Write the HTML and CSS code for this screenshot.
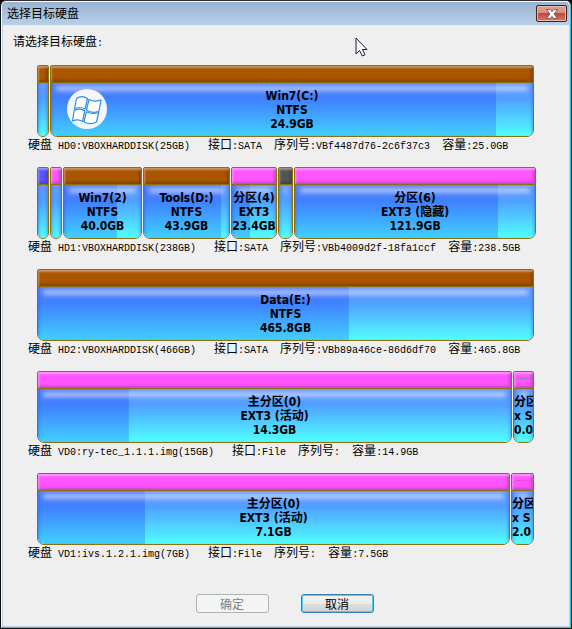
FILE: index.html
```html
<!DOCTYPE html>
<html lang="zh-CN">
<head>
<meta charset="utf-8">
<title>选择目标硬盘</title>
<link rel="stylesheet" href="styles.css">
</head>
<body>
<div class="window">
  <header class="titlebar">
    <h1 class="title">选择目标硬盘</h1>
    <button class="close" type="button" aria-label="关闭">
      <svg width="12" height="10" viewBox="0 0 12 10"><path d="M.6.6h3.600L6 2.600 7.800.6h3.600L8.100 5l3.300 4.400H7.800L6 7.400 4.200 9.400H.6L3.900 5z" fill="#fff" stroke="#5a4a58" stroke-width=".8"/></svg>
    </button>
  </header>
  <main class="content">
    <p class="prompt">请选择目标硬盘<span class="latin">:</span></p>

    <section class="disk">
      <div class="map">
        <div class="part ntfs" style="flex-grow:10"><div class="cap"></div><div class="fill"></div></div>
        <div class="part ntfs" style="flex-grow:482;--used:92.4%"><div class="cap"></div><div class="fill">
          <svg class="logo" width="40" height="40" viewBox="0 0 40 40"><circle cx="20" cy="20" r="20" fill="#f3f6fa"/><g fill="#fff" stroke="#2f8fe0" stroke-width="1.200" stroke-linejoin="round"><path d="M9.500 9.500C13 7 17 7.200 20.500 9.500L18 20C14.500 18 11 18 7.500 20Z"/><path d="M22 10.500C26 13 30 12.500 34 11L32 22C28 24 23.500 23.500 19.500 21Z"/><path d="M7.200 21.500C11 19.500 14.500 19.800 17.800 21.800L15.500 32.500C12.500 30.500 9 30.500 5.500 32Z"/><path d="M19.300 22.800C23.500 25 27.500 25 31.700 23.500L29.500 33C25 35.500 21 35 17 33Z"/></g></svg>
          <p class="label">Win7(C:)<br>NTFS<br>24.9GB</p></div></div>
      </div>
      <p class="info"><span>硬盘<span class="latin"> HD0:VBOXHARDDISK(25GB)</span></span><span>接口<span class="latin">:SATA</span></span><span>序列号<span class="latin">:VBf4487d76-2c6f37c3</span></span><span>容量<span class="latin">:25.0GB</span></span></p>
    </section>

    <section class="disk">
      <div class="map map-wide">
        <div class="part fat" style="flex-grow:10"><div class="cap"></div><div class="fill"></div></div>
        <div class="part ext" style="flex-grow:10"><div class="cap"></div><div class="fill"></div></div>
        <div class="part ntfs" style="flex-grow:77;--used:69%"><div class="cap"></div><div class="fill"><p class="label">Win7(2)<br>NTFS<br>40.0GB</p></div></div>
        <div class="part ntfs" style="flex-grow:85;--used:91%"><div class="cap"></div><div class="fill"><p class="label">Tools(D:)<br>NTFS<br>43.9GB</p></div></div>
        <div class="part ext" style="flex-grow:44;--used:41%"><div class="cap"></div><div class="fill"><p class="label">分区(4)<br>EXT3<br>23.4GB</p></div></div>
        <div class="part other" style="flex-grow:13"><div class="cap"></div><div class="fill"></div></div>
        <div class="part ext" style="flex-grow:240;--used:84.6%"><div class="cap"></div><div class="fill"><p class="label">分区(6)<br>EXT3 (隐藏)<br>121.9GB</p></div></div>
      </div>
      <p class="info"><span>硬盘<span class="latin"> HD1:VBOXHARDDISK(238GB)</span></span><span>接口<span class="latin">:SATA</span></span><span>序列号<span class="latin">:VBb4009d2f-18fa1ccf</span></span><span>容量<span class="latin">:238.5GB</span></span></p>
    </section>

    <section class="disk">
      <div class="map">
        <div class="part ntfs" style="flex-grow:1;--used:62.8%"><div class="cap"></div><div class="fill"><p class="label">Data(E:)<br>NTFS<br>465.8GB</p></div></div>
      </div>
      <p class="info"><span>硬盘<span class="latin"> HD2:VBOXHARDDISK(466GB)</span></span><span>接口<span class="latin">:SATA</span></span><span>序列号<span class="latin">:VBb89a46ce-86d6df70</span></span><span>容量<span class="latin">:465.8GB</span></span></p>
    </section>

    <section class="disk">
      <div class="map">
        <div class="part ext" style="flex-grow:473;--used:19.2%"><div class="cap"></div><div class="fill"><p class="label">主分区(0)<br>EXT3 (活动)<br>14.3GB</p></div></div>
        <div class="part ext" style="flex-grow:19"><div class="cap dots"></div><div class="fill"><p class="label label-cut">分区<br>x S<br>0.0</p></div></div>
      </div>
      <p class="info"><span>硬盘<span class="latin"> VD0:ry-tec_1.1.1.img(15GB)</span></span><span>接口<span class="latin">:File</span></span><span>序列号<span class="latin">:</span></span><span>容量<span class="latin">:14.9GB</span></span></p>
    </section>

    <section class="disk">
      <div class="map">
        <div class="part ext" style="flex-grow:471;--used:22.8%"><div class="cap"></div><div class="fill"><p class="label">主分区(0)<br>EXT3 (活动)<br>7.1GB</p></div></div>
        <div class="part ext" style="flex-grow:21"><div class="cap dots"></div><div class="fill"><p class="label label-cut">分区<br>x S<br>2.0</p></div></div>
      </div>
      <p class="info"><span>硬盘<span class="latin"> VD1:ivs.1.2.1.img(7GB)</span></span><span>接口<span class="latin">:File</span></span><span>序列号<span class="latin">:</span></span><span>容量<span class="latin">:7.5GB</span></span></p>
    </section>
  </main>
  <footer class="actions">
    <button class="btn" type="button" disabled>确定</button>
    <button class="btn btn-default" type="button">取消</button>
  </footer>
</div>
<svg class="cursor" width="13" height="20" viewBox="0 0 13 20"><path d="M1 1V17L4.500 13.500 7.300 19 10 17.800 7.500 12.500H12Z" fill="#f6f6fa" stroke="#1c1c38" stroke-width="1"/></svg>
</body>
</html>
```
FILE: styles.css
```css
* {
  box-sizing: border-box;
}

body {
  margin: 0;
  background: #000;
  color: #000;
  font: 12px/14px "Liberation Sans", "Noto Sans CJK SC", sans-serif;
}

h1,
p {
  margin: 0;
}

.window {
  display: flex;
  flex-direction: column;
  min-height: 100vh;
  border: 1px solid #111;
  border-top-color: #332d33;
  border-radius: 6px 6px 0 0;
  padding: 1px 2px 2px 1px;
  background: #efefef;
  box-shadow: inset -1px -1px #35c5e8, inset 1px 1px #f8fbff, inset -2px -2px #b7d3ec, inset 2px 0 #bcd2ea;
}

.titlebar {
  display: flex;
  align-items: center;
  justify-content: space-between;
  height: 23px;
  padding: 0 2px 0 5px;
  border-radius: 4px 4px 0 0;
  background: linear-gradient(#99b4d1, #b9cfe8);
}

.title {
  font-size: 12px;
  font-weight: 400;
}

.close {
  display: flex;
  align-items: center;
  justify-content: center;
  width: 31px;
  height: 17px;
  padding: 0;
  border: 1px solid #4b1b22;
  border-radius: 2px;
  background: linear-gradient(#e2a294, #d88c7c 48%, #c04a36 50%, #d67a66);
  box-shadow: inset 0 0 0 1px #eab8ac;
}

.content {
  flex: 1;
  padding: 10px 35px 0 26px;
}

.prompt {
  margin: 0 0 14px -15px;
  line-height: 14px;
}

.latin {
  font-family: "Liberation Mono", monospace;
  font-size: 10px;
  white-space: pre;
}

.disk {
  height: 102px;
}

.map {
  display: flex;
  gap: 1px;
  height: 72px;
  margin-left: 9px;
}

.map-wide {
  margin-right: -2px;
}

.part {
  display: flex;
  flex-direction: column;
  flex-basis: 0;
  min-width: 0;
  overflow: hidden;
  border: 1px solid #8c7010;
  border-radius: 2px 2px 7px 7px;
}

.cap {
  height: 17px;
  border-bottom: 1px solid #8c7010;
  background: var(--cap);
  box-shadow: inset 1px 2px 2px #ffffff60, inset -2px -2px 3px #00000038;
}

.ntfs { --cap: #aa5500; }
.ext { --cap: #ff55ff; }
.fat { --cap: #5555ff; }
.other { --cap: #555; }

.dots::before {
  content: "";
  display: block;
  width: 14px;
  height: 6px;
  margin: 0 auto;
  border-bottom: 1px dotted #a06a98;
}

.fill {
  position: relative;
  flex: 1;
  overflow: hidden;
  background:
    linear-gradient(#5a80f8, #4080ff 30%, #40d0ff) 0 0 / var(--used, 0%) 100% no-repeat,
    linear-gradient(#6a98ff, #50a0ff 30%, #50ffff);
  box-shadow: inset 3px 0 3px -2px #3060d080, inset -3px 0 3px -2px #3060d080;
}

.fill::before {
  content: "";
  position: absolute;
  inset: 3px 5px auto;
  height: 5px;
  border-radius: 3px;
  background: #ffffff80;
  filter: blur(2px);
}

.label {
  position: relative;
  padding-top: 6px;
  font: bold 12px/14px "DejaVu Sans Condensed", "Noto Sans CJK SC", sans-serif;
  text-align: center;
  white-space: nowrap;
}

.label-cut {
  text-align: left;
}

.logo {
  position: absolute;
  top: 6px;
  left: 16px;
}

.info {
  display: flex;
  gap: 12px;
  padding-top: 1px;
  line-height: 15px;
  white-space: nowrap;
}

.info > :first-child {
  margin-right: 6px;
}

.actions {
  display: flex;
  justify-content: center;
  gap: 32px;
  padding: 0 2px 13px 0;
}

.btn {
  width: 73px;
  height: 19px;
  padding: 0;
  border: 1px solid #707070;
  border-radius: 3px;
  background: linear-gradient(#f4f4f4, #ebebeb 50%, #dedede 50%, #d0d4d8);
  color: #000;
  font: 12px/14px "Noto Sans CJK SC", sans-serif;
}

.btn:disabled {
  border-color: #adb2b5;
  background: #f4f4f4;
  color: #838383;
}

.btn-default {
  border-color: #3c7fb1;
  box-shadow: inset 0 0 0 1px #48d0f8;
}

.cursor {
  position: absolute;
  top: 37px;
  left: 355px;
}
```
